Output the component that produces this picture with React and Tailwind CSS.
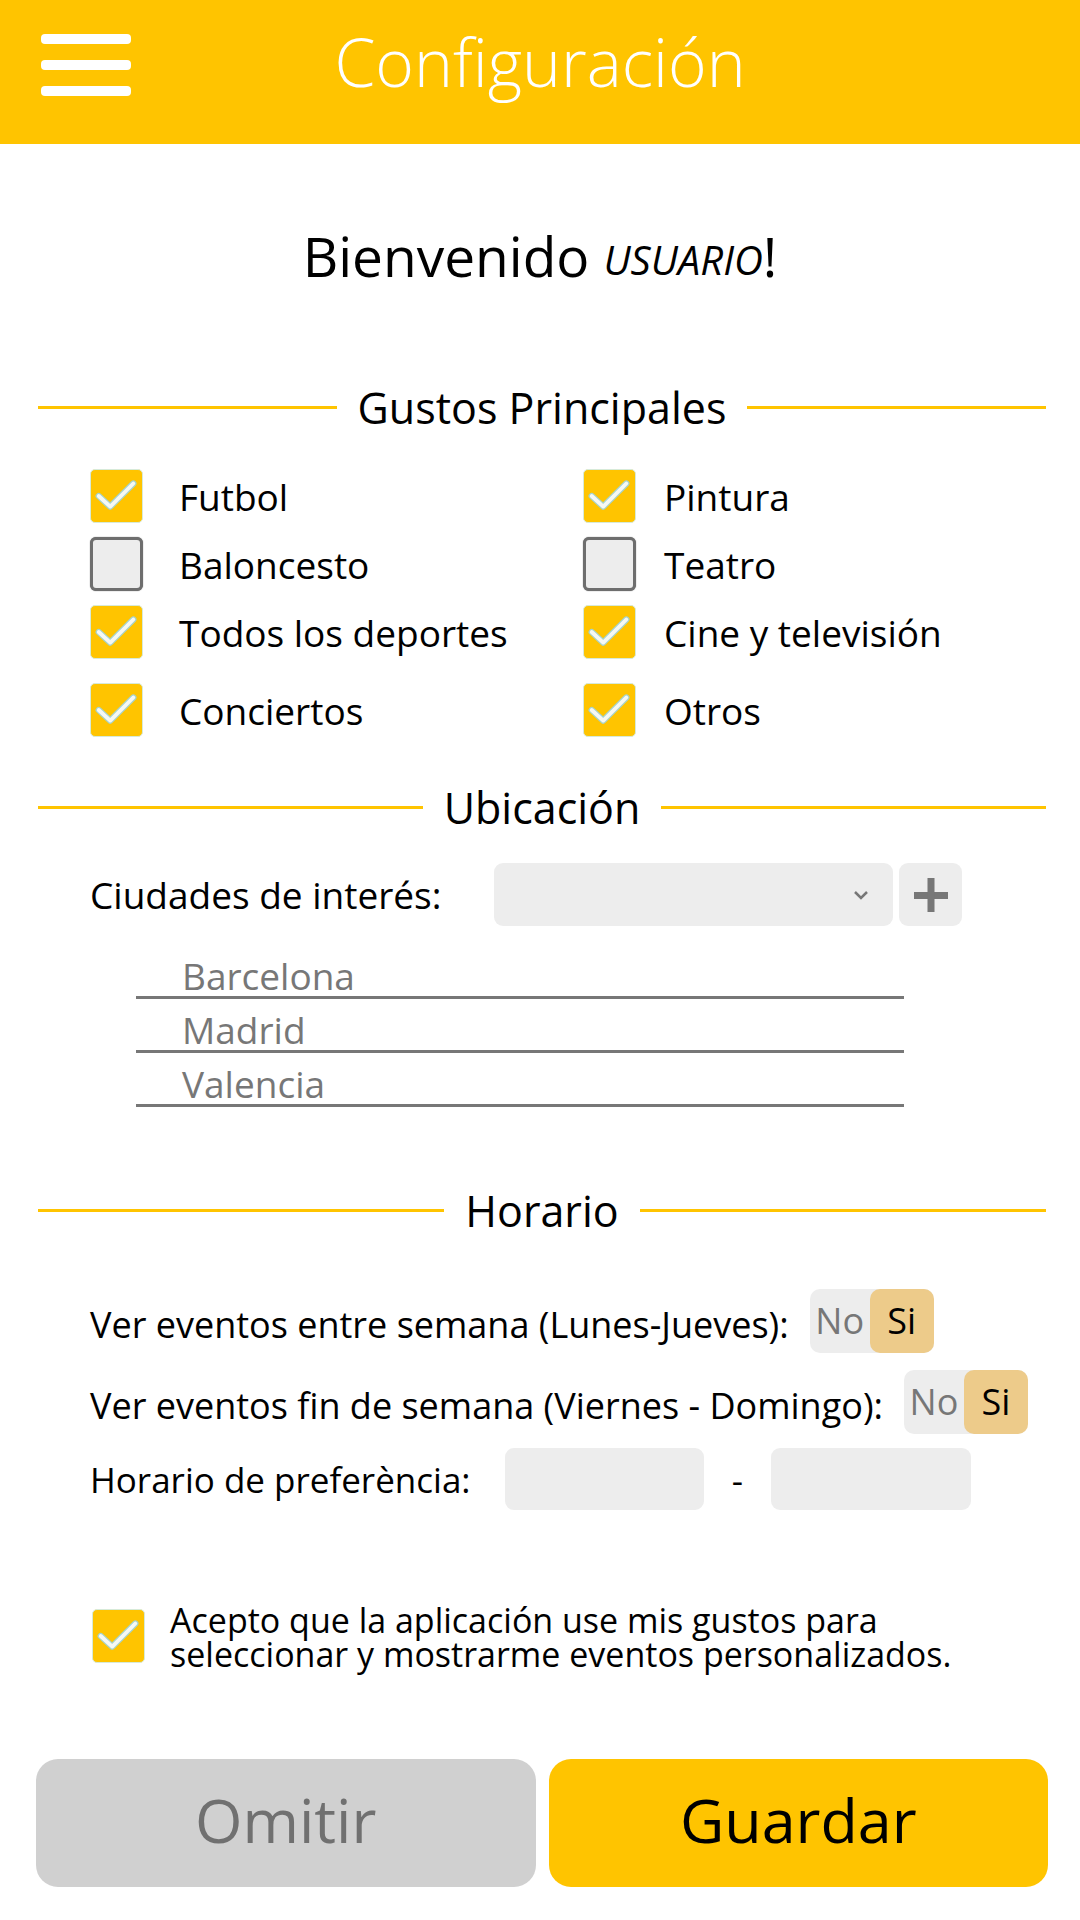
import React from 'react'

const gustos = [
  { left: ['Futbol', true], right: ['Pintura', true] },
  { left: ['Baloncesto', false], right: ['Teatro', false] },
  { left: ['Todos los deportes', true], right: ['Cine y televisión', true] },
  { left: ['Conciertos', true], right: ['Otros', true] },
]

const ciudades = ['Barcelona', 'Madrid', 'Valencia']

const Check = ({ checked }) => {
  if (!checked) {
    return (
      <div className="w-[53px] h-[54px] shrink-0 rounded-[6px] border-[3px] border-[#6e6e6e] bg-[#ededed] shadow-[0_0_1px_#555]"/>
    )
  }
  return (
    <div className="w-[53px] h-[54px] shrink-0 rounded-[5px] bg-[#ffc400] border border-[#d7ead8]">
      <svg viewBox="0 0 53 54" className="w-full h-full">
        <polyline points="8,27 20,38 44,14" fill="none" stroke="#a6d3cb" strokeWidth="6.5" strokeLinecap="round" strokeLinejoin="round"/>
        <polyline points="8,27 20,38 44,14" fill="none" stroke="#f6f8f4" strokeWidth="4" strokeLinecap="round" strokeLinejoin="round"/>
      </svg>
    </div>
  )
}

const SectionTitle = ({ children }) => (
  <div className="h-[50px] flex items-center gap-[21px] pl-[38px] pr-[34px]">
    <div className="flex-1 h-[3px] bg-[#ffc400]"/>
    <span className="text-[43px] leading-none text-black">{children}</span>
    <div className="flex-1 h-[3px] bg-[#ffc400]"/>
  </div>
)

const Toggle = () => (
  <div className="ml-[21px] w-[124px] h-[64px] flex rounded-[10px] bg-[#ededed] text-[36px] leading-none">
    <div className="w-[60px] flex items-center justify-center text-[#777]">No</div>
    <div className="flex-1 flex items-center justify-center rounded-[10px] bg-[#edcb8a] text-black">Si</div>
  </div>
)

export default function App() {
  return (
    <div className="w-[1080px] min-h-[1920px] bg-white font-['Open_Sans',sans-serif] text-black">
      {/* header */}
      <div className="h-[144px] bg-[#ffc400] grid grid-cols-[1fr_auto_1fr] items-center pb-[14px]">
        <div className="pl-[41px] flex flex-col gap-[16px]">
          <div className="w-[90px] h-[10px] rounded-[4px] bg-white"/>
          <div className="w-[90px] h-[10px] rounded-[4px] bg-white"/>
          <div className="w-[90px] h-[10px] rounded-[4px] bg-white"/>
        </div>
        <div className="text-white text-[66px] leading-none font-light -mt-[8px]">Configuración</div>
        <div/>
      </div>

      {/* bienvenida */}
      <div className="mt-[71px] h-[80px] flex items-center justify-center">
        <span className="text-[55px] leading-none">Bienvenido</span>
        <span className="ml-[14px] text-[40px] italic leading-none mt-[9px]">USUARIO</span>
        <span className="text-[55px] leading-none">!</span>
      </div>

      {/* gustos */}
      <div className="mt-[87px]">
        <SectionTitle>Gustos Principales</SectionTitle>
      </div>
      <div className="mt-[37px] pl-[90px] flex flex-col gap-[14px]">
        {gustos.map((row, i) => (
          <div key={i} className={`grid grid-cols-[493px_1fr] ${i === 3 ? 'mt-[10px]' : ''}`}>
            <div className="flex items-center gap-[36px]">
              <Check checked={row.left[1]}/>
              <span className="text-[37px] leading-none">{row.left[0]}</span>
            </div>
            <div className="flex items-center gap-[28px]">
              <Check checked={row.right[1]}/>
              <span className="text-[37px] leading-none">{row.right[0]}</span>
            </div>
          </div>
        ))}
      </div>

      {/* ubicacion */}
      <div className="mt-[45px]">
        <SectionTitle>Ubicación</SectionTitle>
      </div>
      <div className="mt-[31px] pl-[90px] flex items-center h-[63px]">
        <span className="w-[404px] text-[37px] leading-none">Ciudades de interés:</span>
        <div className="w-[399px] h-[63px] rounded-[9px] bg-[#ededed] flex items-center justify-end pr-[24px]">
          <svg width="16" height="10" viewBox="0 0 16 10">
            <polyline points="2,2 8,8 14,2" fill="none" stroke="#777" strokeWidth="2.5"/>
          </svg>
        </div>
        <div className="ml-[6px] w-[63px] h-[63px] rounded-[9px] bg-[#ededed] flex items-center justify-center">
          <svg width="34" height="34" viewBox="0 0 34 34">
            <rect x="0" y="14" width="34" height="7" fill="#777"/>
            <rect x="13.5" y="0" width="7" height="34" fill="#777"/>
          </svg>
        </div>
      </div>
      <div className="mt-[19px] ml-[136px] w-[768px]">
        {ciudades.map((c) => (
          <div key={c} className="h-[54px] border-b-[3px] border-[#777] flex items-end pl-[46px] pb-[2px]">
            <span className="text-[37px] leading-none text-[#777]">{c}</span>
          </div>
        ))}
      </div>

      {/* horario */}
      <div className="mt-[78px]">
        <SectionTitle>Horario</SectionTitle>
      </div>
      <div className="mt-[54px] pl-[90px] flex flex-col">
        <div className="flex items-center h-[64px]">
          <span className="text-[36px] leading-none mt-[8px]">Ver eventos entre semana (Lunes-Jueves):</span>
          <Toggle/>
        </div>
        <div className="mt-[17px] flex items-center h-[64px]">
          <span className="text-[36px] leading-none mt-[8px]">Ver eventos fin de semana (Viernes - Domingo):</span>
          <Toggle/>
        </div>
        <div className="mt-[14px] flex items-center h-[62px]">
          <span className="w-[415px] text-[35px] leading-none">Horario de preferència:</span>
          <div className="w-[199px] h-[62px] rounded-[9px] bg-[#ededed]"/>
          <span className="w-[67px] text-center text-[35px] leading-none">-</span>
          <div className="w-[200px] h-[62px] rounded-[9px] bg-[#ededed]"/>
        </div>
      </div>

      {/* consentimiento */}
      <div className="mt-[99px] pl-[92px] flex items-start gap-[25px]">
        <Check checked/>
        <div className="text-[34px] leading-[34px] -mt-[6px]">
          <div>Acepto que la aplicación use mis gustos para</div>
          <div>seleccionar y mostrarme eventos personalizados.</div>
        </div>
      </div>

      {/* botones */}
      <div className="mt-[88px] px-[36px] pr-[32px] grid grid-cols-2 gap-[13px]">
        <button className="h-[128px] rounded-[22px] bg-[#d0d0d0] text-[#707070] text-[61px] leading-none pb-[8px]">Omitir</button>
        <button className="h-[128px] rounded-[22px] bg-[#ffc400] text-black text-[61px] leading-none pb-[8px]">Guardar</button>
      </div>
    </div>
  )
}
